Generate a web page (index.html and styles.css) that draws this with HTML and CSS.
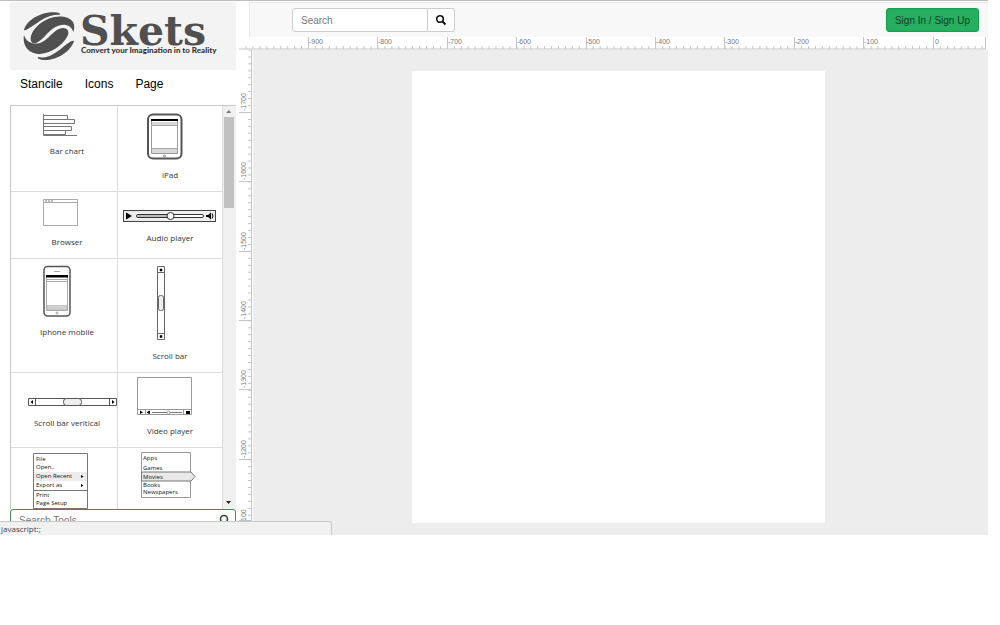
FILE: index.html
```html
<!DOCTYPE html>
<html lang="en">
<head>
<meta charset="utf-8">
<title>Skets</title>
<link rel="stylesheet" href="styles.css">
</head>
<body>
<div class="app">
  <aside class="sidebar">
    <a class="logo" href="#" aria-label="Skets">
      <svg width="226" height="68" viewBox="10 2 226 68">
        <g fill="#505050">
          <path d="M24 30C27 19 43 11 57 12.500C60 13 61 14.500 59 14.800C48 14.500 42 20 34 25C29 28 26 31 24 30Z"/>
          <path d="M31 41C29 33 38 23 49 18.500C58 15 69 16 73 22C75 26 74 30 73.500 32C71 26 66 23.500 59 25.500C50 28 46 37 38 42C35 44 32 43.500 31 41Z"/>
          <path d="M24 35C26 42 33 45 40 43C49 40 53 29 63 28C68 28 70 32 67 37C62 46 51 53 40 54C30 54 22 47 24 35Z"/>
          <path d="M74 41C71 51 57 61 43 60C39 59.500 37 58 38 57C49 59 55 53 62 48C67 44 72 40 74 41Z"/>
        </g>
        <text class="logo-name" x="80" y="45">Skets</text>
        <text class="logo-tagline" x="81" y="53">Convert your Imagination in to Reality</text>
      </svg>
    </a>
    <nav class="tabs">
      <a href="#">Stancile</a>
      <a href="#">Icons</a>
      <a href="#">Page</a>
    </nav>
    <div class="stencils">
      <div class="stencil-grid">
        <button class="stencil" type="button">
          <svg width="106" height="39" viewBox="11 106 106 39" fill="#fff" stroke="#777">
            <path d="M43.500 114V135.500H77" fill="none"/>
            <path d="M43.500 115.500H67.500V119.500H43.500ZM43.500 119.500H74.500V123.500H43.500ZM43.500 126.500H71.500V130.500H43.500ZM43.500 130.500H65.500V134.500H43.500Z"/>
          </svg>
          <span>Bar chart</span>
        </button>
        <button class="stencil" type="button">
          <svg width="104" height="63" viewBox="118 106 104 63" fill="none">
            <rect x="148" y="114.500" width="33.500" height="44" rx="5" fill="#fff" stroke="#555" stroke-width="2"/>
            <path d="M151.500 119V153.500H177.500V119" stroke="#999"/>
            <path d="M151 119H178V121H151Z" fill="#000"/>
            <path d="M152 122H177V125.500H152ZM152 149H177V153H152Z" fill="#d8d8d8"/>
            <path d="M151 125.500H178M151 148.500H178" stroke="#aaa"/>
            <circle cx="164.500" cy="156" r="1" stroke="#888"/>
          </svg>
          <span>iPad</span>
        </button>
        <button class="stencil" type="button">
          <svg width="106" height="44" viewBox="11 192 106 44" fill="none" stroke="#aaa">
            <path d="M43.500 199.500H77.500V225.500H43.500ZM43.500 202.500H77.500"/>
            <path d="M45 201H54" stroke="#777" stroke-dasharray="2 1"/>
          </svg>
          <span>Browser</span>
        </button>
        <button class="stencil" type="button">
          <svg width="104" height="40" viewBox="118 192 104 40" fill="none" stroke="#333">
            <rect x="123.500" y="210.500" width="92" height="11" fill="#eee" stroke="#444"/>
            <path d="M126 212.500L132 216L126 219.500Z" fill="#000" stroke="none"/>
            <rect x="136.500" y="214.500" width="67" height="3" rx="1.500" fill="#fff"/>
            <path d="M138 216H168" stroke="#bbb" stroke-width="2"/>
            <circle cx="170.500" cy="216" r="3.500" fill="#fff"/>
            <path d="M206 215H208L211 212.500V219.500L208 217H206Z" fill="#000" stroke="none"/>
            <path d="M212 213.500Q214 216 212 218.500" stroke="#000"/>
          </svg>
          <span>Audio player</span>
        </button>
        <button class="stencil" type="button">
          <svg width="106" height="67" viewBox="11 259 106 67" fill="none">
            <rect x="44" y="266.500" width="26" height="49.500" rx="3.500" fill="#fff" stroke="#555" stroke-width="1.500"/>
            <path d="M54 271.500H60M46.500 277V310.500H67.500V277M47 279.500H67M47 281.500H67" stroke="#aaa"/>
            <path d="M46 275H68V277.500H46Z" fill="#000"/>
            <path d="M47 305.500H67V310H47Z" fill="#d0d0d0" stroke="#aaa" stroke-width=".5"/>
            <circle cx="57" cy="313" r="1" stroke="#888" stroke-width=".7"/>
          </svg>
          <span>Iphone mobile</span>
        </button>
        <button class="stencil" type="button">
          <svg width="104" height="91" viewBox="118 259 104 91" fill="none" stroke="#666">
            <path d="M157.500 266.500H164.500V339.500H157.500ZM157.500 272.500H164.500M157.500 333.500H164.500"/>
            <rect x="158.500" y="295.500" width="5" height="15" rx="2" fill="#eee"/>
            <path d="M160 269H162V271H160ZM160 335.500H162V337.500H160Z" fill="#000" stroke="#000" stroke-width=".5"/>
          </svg>
          <span>Scroll bar</span>
        </button>
        <button class="stencil" type="button">
          <svg width="106" height="44" viewBox="11 373 106 44" fill="none" stroke="#555">
            <path d="M28.500 398.500H116.500V405.500H28.500ZM35.500 398V406M109.500 398V406"/>
            <rect x="63.500" y="398.500" width="18" height="7" rx="3" fill="#eee"/>
            <path d="M33 400V404L30.500 402ZM112 400V404L114.500 402Z" fill="#000" stroke="none"/>
          </svg>
          <span>Scroll bar veritical</span>
        </button>
        <button class="stencil" type="button">
          <svg width="104" height="52" viewBox="118 373 104 52" fill="none" stroke="#999">
            <path d="M137.500 377.500H191.500V414.500H137.500ZM137.500 409.500H191.500M145.500 409V415M183.500 409V415"/>
            <path d="M152 412.500H182" stroke="#777"/>
            <circle cx="168.500" cy="412.500" r="1.500" fill="#fff"/>
            <path d="M140 410.500L143 412.500L140 414ZM147 412L150 410.500V414L147 413ZM186 411H190V414H186Z" fill="#000" stroke="none"/>
          </svg>
          <span>Video player</span>
        </button>
        <button class="stencil" type="button">
          <svg width="106" height="66" viewBox="11 448 106 66" fill="none" stroke="#777">
            <path d="M33.500 508.500V453.500H87.500V508.500Z"/>
            <path d="M34 472H87V481H34Z" fill="#ececec" stroke="none"/>
            <path d="M33 490.500H88"/>
            <path d="M81 475L83.500 476.500L81 478ZM81 484L83.500 485.500L81 487Z" fill="#000" stroke="none"/>
            <g class="menu-text">
              <text x="36" y="461">File</text><text x="36" y="469">Open..</text><text x="36" y="478">Open Recent</text>
              <text x="36" y="487">Export as</text><text x="36" y="497">Print</text><text x="36" y="505">Page Setup</text>
            </g>
          </svg>
        </button>
        <button class="stencil" type="button">
          <svg width="104" height="66" viewBox="118 448 104 66" fill="none" stroke="#999">
            <path d="M141.500 452.500H190.500V497.500H141.500Z"/>
            <path d="M141.500 472H191L195 476.500L191 481H141.500Z" fill="#e8e8e8" stroke="#777"/>
            <g class="menu-text">
              <text x="143" y="460">Apps</text><text x="143" y="470">Games</text><text x="143" y="479">Movies</text>
              <text x="143" y="487">Books</text><text x="143" y="494">Newspapers</text>
            </g>
          </svg>
        </button>
      </div>
      <div class="scrollbar">
        <svg width="12" height="11" viewBox="0 0 12 11"><path d="M3 7L6 4L8 7Z" fill="#777"/></svg>
        <div class="thumb"></div>
        <svg class="down" width="12" height="12" viewBox="0 0 12 12"><path d="M3 4H8L5.500 7Z" fill="#222"/></svg>
      </div>
    </div>
    <label class="tool-search">
      <input type="text" placeholder="Search Tools" aria-label="Search Tools">
      <svg width="12" height="12" viewBox="0 0 12 12" fill="none" stroke="#1d4d22" stroke-width="1.500"><circle cx="6" cy="5" r="3.500"/><path d="M9 8L11 11"/></svg>
    </label>
  </aside>
  <main class="main">
    <header class="topbar">
      <form class="search">
        <input type="text" placeholder="Search" aria-label="Search">
        <button type="button" aria-label="Search">
          <svg width="12" height="12" viewBox="0 0 12 12" fill="none" stroke="#111" stroke-width="1.600"><circle cx="5" cy="5" r="3.300"/><path d="M7.500 7.500L10.500 10.500" stroke-width="2"/></svg>
        </button>
      </form>
      <button class="sign" type="button">Sign In / Sign Up</button>
    </header>
    <div class="ruler-top">
      <svg width="747" height="13" viewBox="239 37 747 13">
        <defs><pattern id="tx" patternUnits="userSpaceOnUse" x="308" y="37" width="6.944" height="13"><path d="M0 9H1V12H0Z" fill="#c4c4c4"/></pattern></defs>
        <rect x="245" y="37" width="740" height="13" fill="url(#tx)"/>
        <path d="M308.500 37V49M377.500 37V49M447.500 37V49M516.500 37V49M586.500 37V49M655.500 37V49M724.500 37V49M794.500 37V49M863.500 37V49M933.500 37V49M985.500 37V49M239 49H986" stroke="#c4c4c4"/>
        <g class="ruler-text">
          <text x="309" y="44">-900</text><text x="378" y="44">-800</text><text x="448" y="44">-700</text><text x="517" y="44">-600</text><text x="586" y="44">-500</text><text x="656" y="44">-400</text><text x="725" y="44">-300</text><text x="795" y="44">-200</text><text x="864" y="44">-100</text><text x="935" y="44">0</text>
        </g>
      </svg>
    </div>
    <div class="workspace">
      <svg class="ruler-left" width="14" height="471" viewBox="239 50 14 471">
        <defs><pattern id="ty" patternUnits="userSpaceOnUse" x="239" y="112" width="14" height="6.944"><path d="M9 0H12V1H9Z" fill="#c4c4c4"/></pattern></defs>
        <rect x="239" y="50" width="14" height="471" fill="url(#ty)"/>
        <path d="M239 112.500H252M239 181.500H252M239 251.500H252M239 320.500H252M239 389.500H252M239 459.500H252M251.500 50V521M239 520.500H252" stroke="#c4c4c4"/>
        <g class="ruler-text">
          <text transform="translate(246 111) rotate(-90)">-1700</text>
          <text transform="translate(246 180) rotate(-90)">-1600</text>
          <text transform="translate(246 250) rotate(-90)">-1500</text>
          <text transform="translate(246 319) rotate(-90)">-1400</text>
          <text transform="translate(246 388) rotate(-90)">-1300</text>
          <text transform="translate(246 458) rotate(-90)">-1200</text>
          <text transform="translate(246 521) rotate(-90)">100</text>
        </g>
      </svg>
      <div class="canvas"><div class="paper"></div></div>
    </div>
  </main>
  <div class="status">javascript:;</div>
</div>
</body>
</html>
```
FILE: styles.css
```css
* { box-sizing: border-box; }
body { margin: 0; background: #fff; color: #000; font-family: "Liberation Sans", Arial, sans-serif; font-size: 12px; }
a { color: inherit; text-decoration: none; }
svg { display: block; flex: none; }
button, input { font: inherit; color: inherit; margin: 0; }
.app { position: relative; display: grid; grid-template-columns: 226px minmax(0, 1fr); column-gap: 3px; margin-right: 12px; padding-left: 10px; border-top: 1px solid #bdbdbd; }
.sidebar { display: flex; flex-direction: column; padding-top: 1px; }
.logo { background: #f3f3f3; border-radius: 2px; }
.logo-name { font: bold 41px "DejaVu Serif", serif; fill: #505050; }
.logo-tagline { font: 900 8px Lato, sans-serif; fill: #333; }
.tabs { display: flex; gap: 22px; height: 35px; padding: 7px 10px; line-height: 14px; }
.stencils { display: flex; height: 404px; overflow: hidden; border: 1px solid #c8c8c8; border-width: 1px 0 0 1px; }
.stencil-grid { display: grid; grid-template-columns: 107px 105px; align-content: start; }
.stencil { display: flex; flex-direction: column; align-items: stretch; padding: 0 0 10px; border: 0 solid #dcdcdc; border-width: 0 1px 1px 0; background: #fff; font: 8px/12px "Open Sans", "Noto Sans", sans-serif; color: #333; text-align: center; }
.stencil:nth-child(odd) span { padding-left: 6px; }
.menu-text { font: 6px "Open Sans", sans-serif; fill: #111; stroke: none; }
.scrollbar { display: flex; flex-direction: column; flex: 1; padding-right: 1px; background: #f0f0f0; }
.thumb { height: 91px; margin: 0 1px; background: #c1c1c1; }
.down { margin-top: auto; }
.tool-search { display: flex; align-items: flex-start; justify-content: space-between; height: 25px; padding: 4px 5px 0 8px; border: 1px solid #4c8a55; border-radius: 3px; }
.tool-search input { width: 120px; height: 12px; padding: 0; border: 0; font-size: 10px; }
.tool-search input::placeholder { color: #777; }
.main { display: flex; flex-direction: column; min-width: 0; }
.topbar { display: flex; align-items: center; justify-content: space-between; height: 35px; margin: 1px 0 0 10px; padding: 0 9px 0 42px; background: #f8f8f8; border: 1px solid #e7e7e7; border-width: 1px 0 0 1px; }
.search { display: flex; height: 24px; }
.search input { width: 136px; padding: 0 8px; border: 1px solid #ccc; border-radius: 3px 0 0 3px; background: #fff; font-size: 10px; }
.search input::placeholder { color: #777; }
.search button { display: flex; align-items: center; justify-content: center; width: 27px; padding: 0; border: 1px solid #ccc; border-left: 0; border-radius: 0 3px 3px 0; background: #fff; }
.sign { height: 24px; padding: 0 8px; border: 1px solid #12a04c; border-radius: 3px; background: #27ae60; color: #123c24; font-size: 10px; }
.ruler-top { overflow: hidden; }
.ruler-text { font: 7px "Liberation Sans", Arial, sans-serif; fill: #777; }
.workspace { display: flex; }
.canvas { flex: 1; display: flex; justify-content: center; padding: 21px 4px 12px 0; background: #ededed; }
.paper { width: 413px; height: 452px; background: #fff; }
.status { position: absolute; left: 0; bottom: 0; width: 332px; height: 14px; padding-left: 1px; border: 1px solid #c8c8c8; border-width: 1px 1px 0 0; border-radius: 0 3px 0 0; background: #f1f1f1; color: #444; font: 8px/13px "Open Sans", sans-serif; }
```
